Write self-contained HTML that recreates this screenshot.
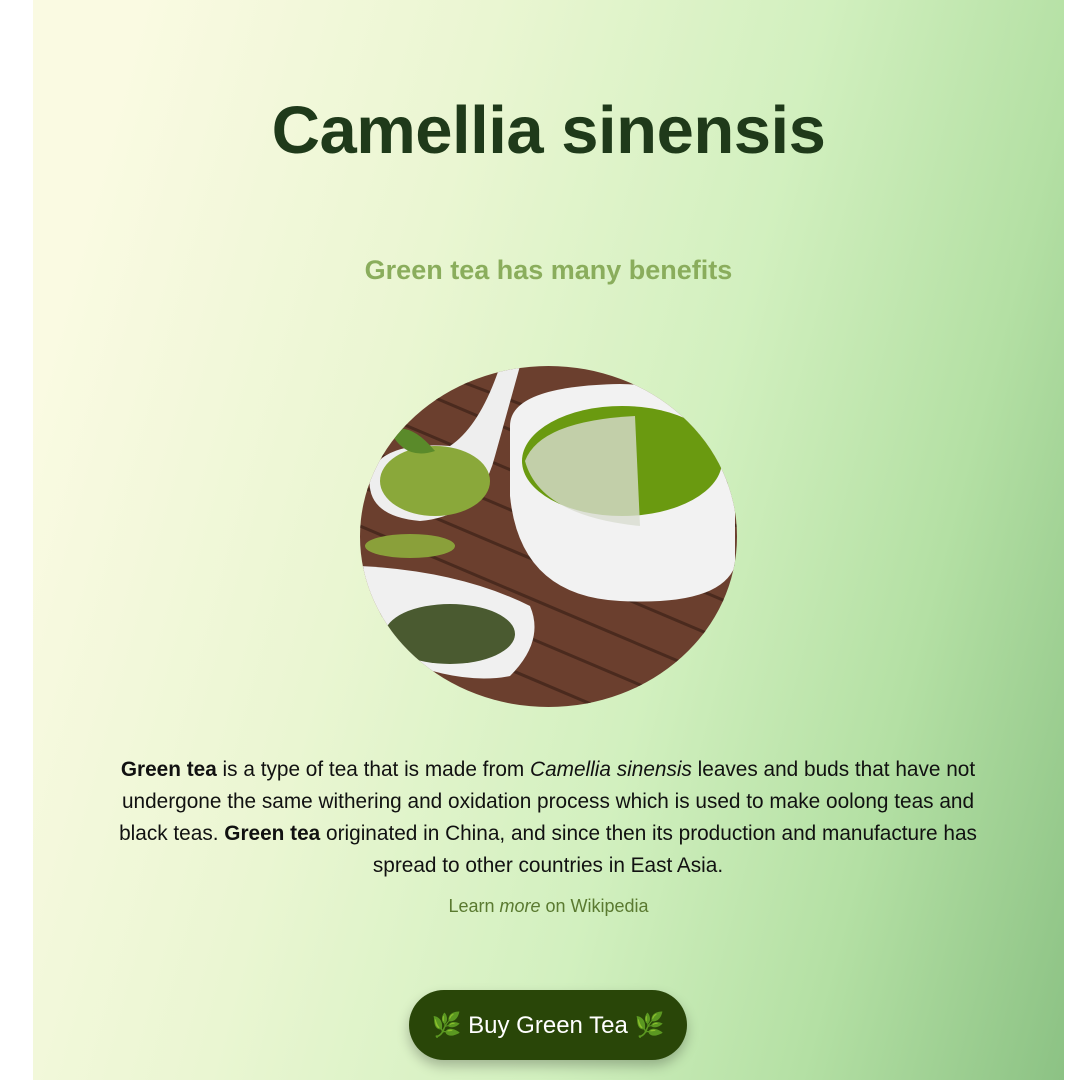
<!DOCTYPE html>
<html><head><meta charset="utf-8"><style>
html,body{margin:0;padding:0;width:1080px;height:1080px;background:#fff;overflow:hidden}
.main{position:absolute;left:33px;top:0;width:1031px;height:1080px;background:linear-gradient(105deg,#fafae2 8%,#eaf6d2 35%,#d2f0bf 60%,#b4e0a4 80%,#8cc284 100%);font-family:"Liberation Sans","DejaVu Sans",sans-serif;text-align:center}
h1{position:absolute;left:0;right:0;top:92px;margin:0;font-size:67px;font-weight:bold;color:#1f3a1a;letter-spacing:-0.5px}
h2{position:absolute;left:0;right:0;top:255px;margin:0;font-size:27px;font-weight:bold;color:#8aad5c}
.img{position:absolute;left:327px;top:366px;width:377px;height:341px;border-radius:50%;overflow:hidden}
p{position:absolute;left:70px;width:890px;top:754px;margin:0;font-size:20.8px;line-height:32px;color:#111}
.learn{position:absolute;left:0;right:0;top:896px;font-size:18px;color:#5a7a30}
.btn{position:absolute;left:376px;top:990px;width:278px;height:70px;border-radius:35px;background:#294608;color:#fff;font-size:24px;line-height:72px;box-shadow:0 6px 12px rgba(0,0,0,.25)}
</style></head><body><div class="main">
<h1>Camellia sinensis</h1>
<h2>Green tea has many benefits</h2>
<div class="img"><svg width="377" height="341" viewBox="0 0 377 341">
<rect width="377" height="341" fill="#6b3f2e"/>
<g stroke="#4a2a1e" stroke-width="3">
<line x1="0" y1="40" x2="377" y2="200"/><line x1="0" y1="80" x2="377" y2="240"/><line x1="0" y1="120" x2="377" y2="280"/><line x1="0" y1="160" x2="377" y2="320"/><line x1="0" y1="200" x2="377" y2="360"/><line x1="0" y1="240" x2="377" y2="400"/><line x1="0" y1="0" x2="377" y2="160"/><line x1="60" y1="0" x2="377" y2="120"/>
</g>
<path d="M140 0 L160 0 L135 90 Q120 150 60 155 Q5 150 10 110 Q20 75 90 80 Q120 60 140 0Z" fill="#eeeeee"/>
<ellipse cx="75" cy="115" rx="55" ry="35" fill="#8aa83a"/>
<path d="M30 65 Q50 55 75 85 Q45 95 30 65Z" fill="#5a8a2a"/>
<ellipse cx="50" cy="180" rx="45" ry="12" fill="#8aa03a"/>
<path d="M0 200 Q100 205 170 240 Q185 275 150 310 Q100 320 30 290 L0 270Z" fill="#f0f0f0"/>
<ellipse cx="90" cy="268" rx="65" ry="30" fill="#4a5a30"/>
<path d="M150 60 Q150 20 260 18 Q370 20 375 90 L375 200 Q360 240 260 235 Q160 230 150 130Z" fill="#f2f2f2"/>
<ellipse cx="262" cy="95" rx="100" ry="55" fill="#6a9a10"/>
<path d="M165 95 Q180 55 275 50 L280 160 Q180 150 165 95Z" fill="#d8dccf" opacity=".8"/>
</svg></div>
<p><b>Green tea</b> is a type of tea that is made from <i>Camellia sinensis</i> leaves and buds that have not undergone the same withering and oxidation process which is used to make oolong teas and black teas. <b>Green tea</b> originated in China, and since then its production and manufacture has spread to other countries in East Asia.</p>
<div class="learn">Learn <i>more</i> on Wikipedia</div>
<div class="btn">🌿 Buy Green Tea 🌿</div>
</div></body></html>
